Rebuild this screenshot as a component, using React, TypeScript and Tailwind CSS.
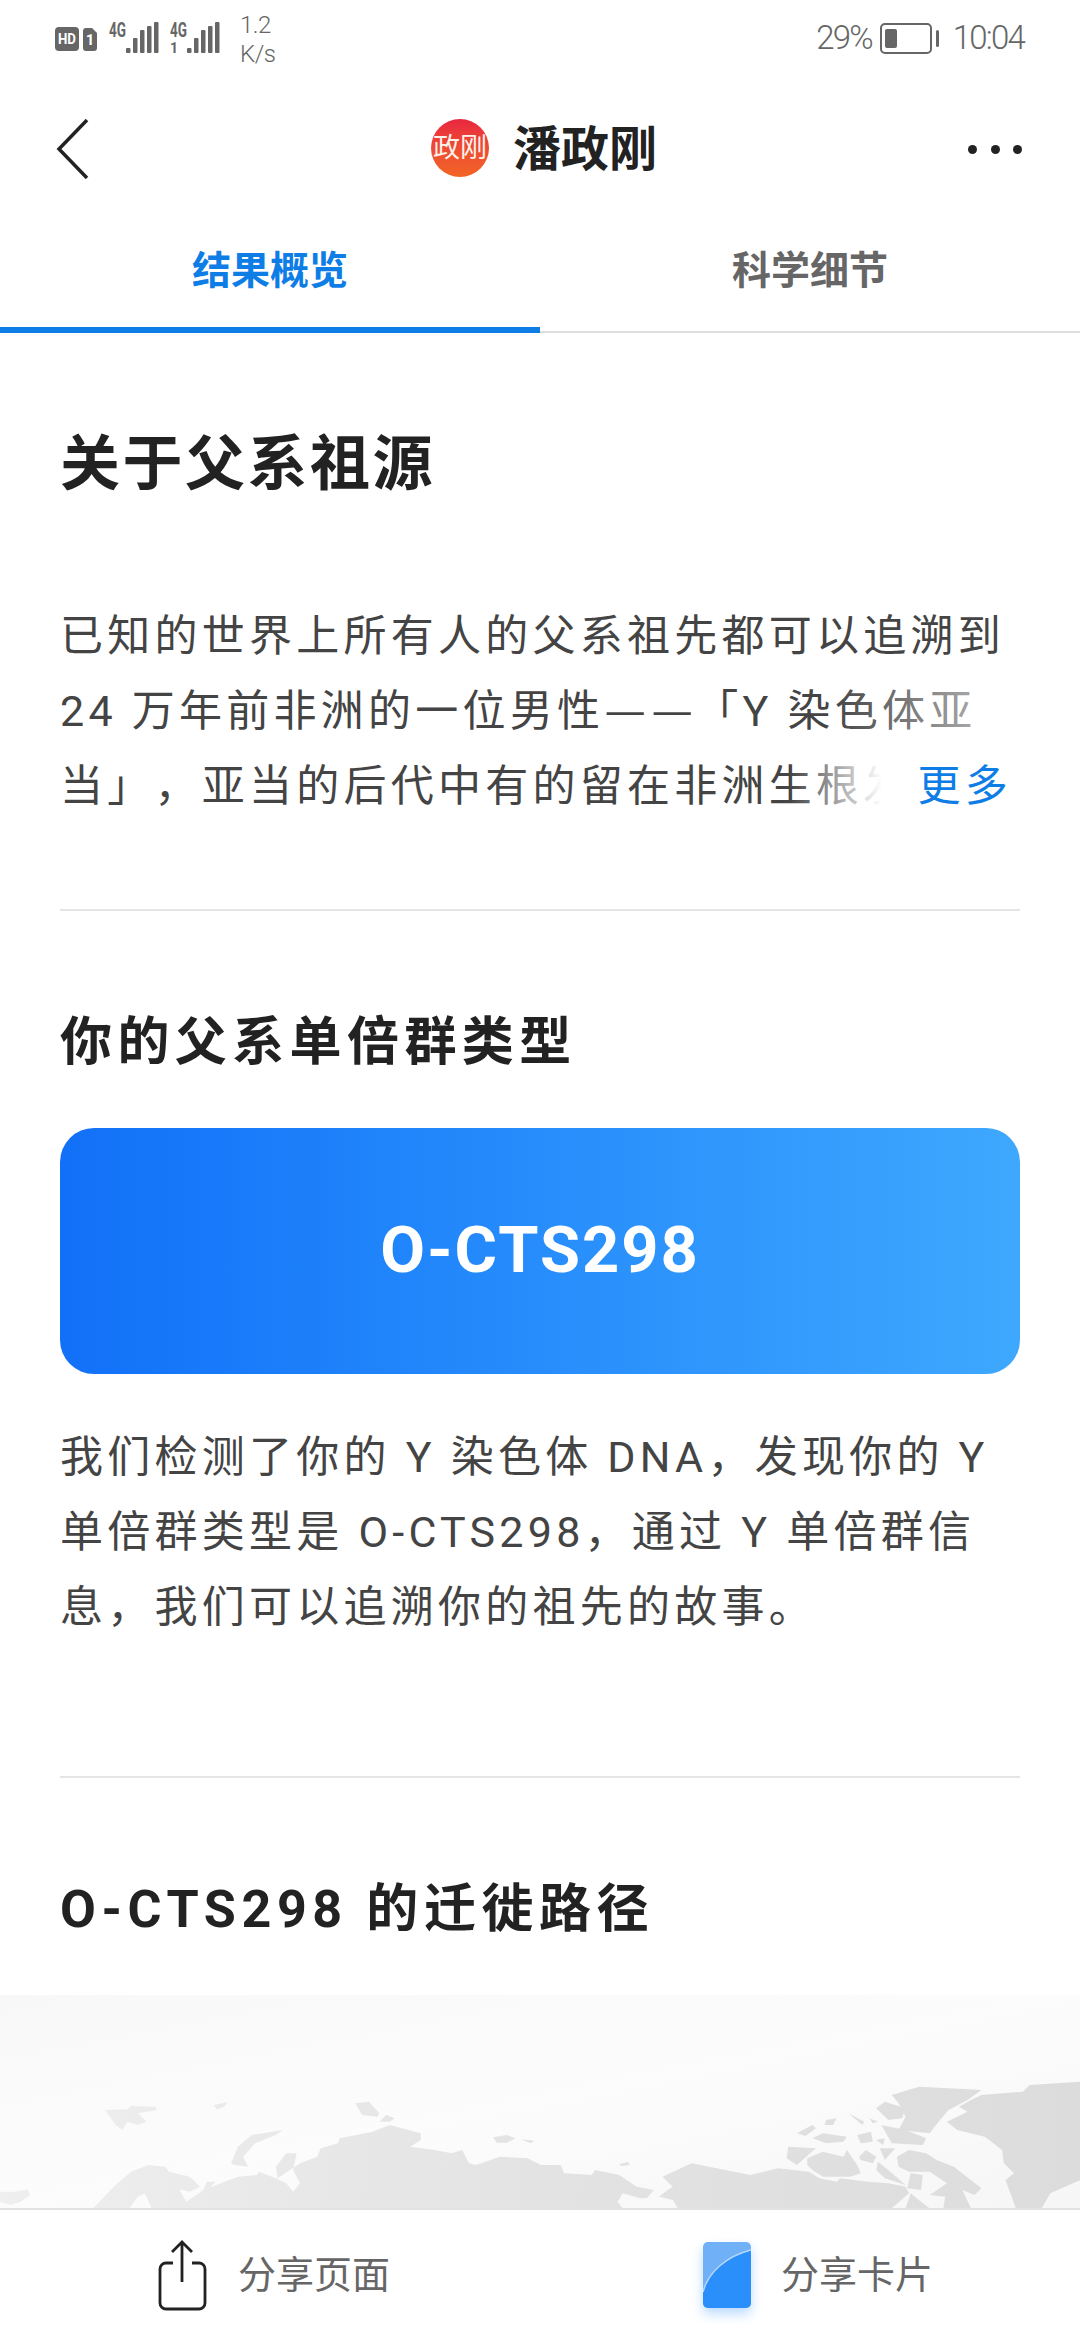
const sans = "font-['Roboto','Noto_Sans_CJK_SC',sans-serif]";

function SignalBars({ x }: { x: number }) {
  return (
    <g fill="#666666">
      <rect x={x} y="48" width="4.5" height="5" rx="1" />
      <rect x={x + 7} y="38" width="4.5" height="15" rx="1" />
      <rect x={x + 14} y="30" width="4.5" height="23" rx="1" />
      <rect x={x + 21} y="26" width="4.5" height="27" rx="1" />
      <rect x={x + 28} y="22" width="4.5" height="31" rx="1" />
    </g>
  );
}

function StatusBar() {
  return (
    <div className="flex h-[74px] items-center justify-between pl-[54px] pr-[56px] text-[#666666]">
      <div className="flex items-center">
        <svg width="180" height="42" viewBox="54 16 180 42">
          <rect x="55" y="27" width="24" height="24" rx="4" fill="#666666" />
          <text x="67" y="44" textAnchor="middle" fontSize="15" fontWeight="700" fill="#fff" fontFamily="Roboto" textLength="18" lengthAdjust="spacingAndGlyphs">HD</text>
          <path d="M86 28h6l5 5v15a3 3 0 0 1-3 3h-8a3 3 0 0 1-3-3V31a3 3 0 0 1 3-3z" fill="#666666" />
          <text x="90" y="45" textAnchor="middle" fontSize="15" fontWeight="700" fill="#fff" fontFamily="Roboto">1</text>
          <text x="109" y="37" fontSize="20" fontWeight="700" fill="#666666" fontFamily="Roboto" textLength="17" lengthAdjust="spacingAndGlyphs">4G</text>
          <SignalBars x={126} />
          <text x="170" y="37" fontSize="20" fontWeight="700" fill="#666666" fontFamily="Roboto" textLength="17" lengthAdjust="spacingAndGlyphs">4G</text>
          <text x="170" y="53" fontSize="14" fontWeight="700" fill="#666666" fontFamily="Roboto">1</text>
          <SignalBars x={187} />
        </svg>
        <div className="mt-[6px] ml-[6px] text-[24px] leading-[29px] font-light tracking-[-0.5px]">
          1.2
          <br />
          K/s
        </div>
      </div>
      <div className="flex items-center pt-[2px] text-[33px] font-light tracking-[-1.8px]">
        <span>29%</span>
        <div className="ml-[8px] flex items-center">
          <div className="flex h-[31px] w-[52px] items-center rounded-[5px] border-2 border-[#666666] px-[3px]">
            <div className="h-[19px] w-[12px] rounded-[2px] bg-[#666666]" />
          </div>
          <div className="ml-[4px] h-[17px] w-[3px] rounded-full bg-[#666666]" />
        </div>
        <span className="ml-[14px]">10:04</span>
      </div>
    </div>
  );
}

function Header() {
  return (
    <div className="grid h-[150px] grid-cols-[1fr_auto_1fr] items-center pl-[66px] pr-[58px] pt-[1px]">
      <svg width="33" height="60" viewBox="0 0 33 60" fill="none" stroke="#222222" strokeWidth="3.5" className="-mt-[2px] -ml-[10px]">
        <path d="M31 1 3 30l28 29" />
      </svg>
      <div className="flex items-center">
        <div className="-mt-[3px] flex h-[58px] w-[58px] items-center justify-center rounded-full bg-gradient-to-b from-[#e9253f] to-[#f26522] text-[27px] whitespace-nowrap text-[#fdf2ea]">
          政刚
        </div>
        <div className="ml-[24px] text-[48px] font-bold text-[#222222]">潘政刚</div>
      </div>
      <div className="flex w-[54px] justify-between justify-self-end">
        <div className="h-[9px] w-[9px] rounded-full bg-[#222222]" />
        <div className="h-[9px] w-[9px] rounded-full bg-[#222222]" />
        <div className="h-[9px] w-[9px] rounded-full bg-[#222222]" />
      </div>
    </div>
  );
}

function Tabs() {
  return (
    <div className="flex h-[109px] border-b-2 border-[#dedede] text-[39px] font-bold">
      <div className="relative flex w-[540px] items-center justify-center pb-[12px] text-[#0e7de6]">
        结果概览
        <div className="absolute bottom-[-2px] left-0 h-[6px] w-full bg-[#0e7de6]" />
      </div>
      <div className="flex w-[540px] items-center justify-center pb-[12px] text-[#666666]">科学细节</div>
    </div>
  );
}

function Dash() {
  return (
    <span className="-ml-[2px] font-['Noto_Sans_CJK_SC',sans-serif] leading-none tracking-normal">
      <span className="inline-block w-[46.5px] scale-x-[1.08] text-center">—</span>
      <span className="inline-block w-[46.5px] scale-x-[1.08] text-center">—</span>
    </span>
  );
}

function Intro() {
  return (
    <section className="mx-[60px] h-[578px] border-b-2 border-[#e5e5e5] pt-[88px]">
      <h1 className="text-[60px] leading-[88px] font-bold tracking-[2.5px] text-[#222222]">关于父系祖源</h1>
      <div className="relative mt-[90px] text-[43px] leading-[75px] tracking-[4.25px] whitespace-nowrap text-[#444444] [text-spacing-trim:space-all]">
        已知的世界上所有人的父系祖先都可以追溯到
        <br />
        24 万年前非洲的一位男性
        <Dash />
        「Y 染色体亚
        <br />
        当」，亚当的后代中有的留在非洲生根发
        <div className="absolute right-0 bottom-[75px] h-[75px] w-[190px] bg-gradient-to-r from-white/0 to-white/70" />
        <div className="absolute right-0 bottom-0 flex h-[75px] w-[230px] items-center justify-end bg-gradient-to-r from-white/0 via-white via-[40%] to-white pr-[8px] text-[#0e7de6]">
          更多
        </div>
      </div>
    </section>
  );
}

function Haplogroup() {
  return (
    <section className="mx-[60px] h-[867px] border-b-2 border-[#e5e5e5] pt-[100px]">
      <h2 className="text-[52px] leading-[64px] font-bold tracking-[5.4px] text-[#222222]">你的父系单倍群类型</h2>
      <div className="mt-[53px] flex h-[246px] items-center justify-center rounded-[34px] bg-gradient-to-r from-[#1270f8] to-[#3ea8fe] text-[65px] font-bold tracking-[2px] text-white">
        O-CTS298
      </div>
      <p className="mt-[46px] text-[43px] leading-[74.8px] tracking-[4.25px] whitespace-nowrap text-[#444444] [text-spacing-trim:space-all]">
        我们检测了你的 Y 染色体 DNA，发现你的 Y
        <br />
        单倍群类型是 O-CTS298，通过 Y 单倍群信
        <br />
        息，我们可以追溯你的祖先的故事。
      </p>
    </section>
  );
}

// outlines were read off two crops of the map: x/2.9, y/3, right crop starts at x=540
const westLand = [
  "0,425 40,425 80,418 88,435 60,455 30,465 0,455",
  "305,180 370,178 380,168 450,170 455,180 400,190 425,215 400,225 370,215 355,240 335,225",
  "620,165 660,157 650,170 630,178",
  "1030,160 1070,155 1100,190 1095,200 1050,195",
  "1100,215 1120,195 1145,205 1130,215",
  "670,340 690,290 730,255 820,240 800,255 740,280 705,320 720,350 680,345",
  "270,475 330,410 380,365 430,345 480,350 490,365 550,380 580,410 550,425 520,418 540,455 590,420 600,395 625,395 610,412 690,380 745,375 750,365 800,385 830,400 850,425 870,400 850,360 860,310 830,310 800,350 805,385 870,340 920,320 930,295 980,280 985,265 1080,245 1130,225 1220,250 1220,270 1190,290 1260,300 1310,310 1340,300 1360,340 1380,345 1450,320 1530,325 1568,345 1568,475 440,475 420,430 400,440 375,475",
  "1430,262 1470,255 1495,265 1470,278 1440,278",
  "1510,268 1550,272 1540,280",
];
const eastLand = [
  "0,345 60,345 70,370 150,375 160,360 230,375 280,410 330,420 310,445 290,445 240,430 225,455 240,475 0,475",
  "230,342 255,336 260,345 235,348",
  "355,380 440,340 610,375 690,355 780,365 810,385 860,395 870,385 950,395 1010,400 1060,410 1070,430 1020,475 400,475 385,450 345,440 370,420 385,410",
  "720,290 800,295 745,345 715,325",
  "775,325 820,305 880,320 890,300 920,345 930,370 900,380 820,380 790,360 775,345",
  "745,250 790,225 800,235 770,258",
  "790,265 820,250 890,260 880,275 830,280",
  "830,210 860,205 850,225 825,225",
  "895,190 940,215 935,225",
  "955,205 980,215 965,220",
  "920,255 960,245 965,275 930,280",
  "975,270 1000,265 995,285",
  "990,225 1060,240 1120,265 1110,285 1020,280",
  "925,320 945,300 975,320 965,340 930,330",
  "985,295 1030,295 1000,330",
  "1035,320 1070,300 1120,310 1150,330 1200,350 1280,415 1260,435 1225,420 1250,475 1170,475 1175,440 1130,435 1180,400 1130,365 1070,365 1040,350",
  "980,335 1010,360 1060,405 1000,385 975,360",
  "1075,370 1110,375 1105,420 1065,415",
  "1060,475 1075,430 1110,460 1130,475",
  "1020,135 1100,110 1280,120 1240,150 1185,180 1160,210 1130,250 1040,240 1060,200 1040,160",
  "975,175 1000,155 1060,175 1050,205 1010,210",
  "1280,135 1400,125 1420,105 1568,95 1568,390 1480,430 1455,475 1380,475 1350,390 1375,370 1345,340 1340,300 1290,260 1210,240 1180,215 1240,185 1215,170 1250,150",
];

function toMap(points: string, offsetX: number) {
  return points
    .split(' ')
    .map((p) => {
      const [x, y] = p.split(',').map(Number);
      return `${(offsetX + x / 2.9).toFixed(1)},${(55 + y / 3).toFixed(1)}`;
    })
    .join(' ');
}

function MigrationMap() {
  return (
    <div className="min-h-0 flex-1 bg-gradient-to-br from-[#f8f8f8] via-[#fcfcfc] to-[#f6f6f6]">
      <svg width="1080" height="213" viewBox="0 0 1080 213" fill="url(#land)" strokeLinejoin="round">
        <defs>
          <linearGradient id="land" gradientUnits="userSpaceOnUse" x1="0" y1="100" x2="1080" y2="160">
            <stop offset="0" stopColor="#efefef" />
            <stop offset="0.5" stopColor="#e3e3e3" />
            <stop offset="1" stopColor="#dcdcdc" />
          </linearGradient>
        </defs>
        {westLand.map((p) => (
          <polygon key={p} points={toMap(p, 0)} />
        ))}
        {eastLand.map((p) => (
          <polygon key={p} points={toMap(p, 540)} />
        ))}
      </svg>
    </div>
  );
}

function BottomBar() {
  return (
    <div className="flex h-[132px] border-t-2 border-[#e2e2e2] text-[38px] text-[#666666]">
      <div className="flex w-[540px] items-center pl-[156px]">
        <svg width="52" height="74" viewBox="0 0 52 74" fill="none" stroke="#222222" strokeWidth="2.8">
          <path d="M26 4v40M16 14 26 4l10 10" />
          <path d="M17 25h-7a6 6 0 0 0-6 6v34a6 6 0 0 0 6 6h33a6 6 0 0 0 6-6V31a6 6 0 0 0-6-6h-7" />
        </svg>
        <span className="ml-[30px]">分享页面</span>
      </div>
      <div className="flex w-[540px] items-center pl-[163px]">
        <svg width="48" height="66" viewBox="0 0 48 66" className="drop-shadow-[0_6px_6px_rgba(60,150,250,0.35)]">
          <rect x="0" y="0" width="48" height="66" rx="5" fill="#6fb0f6" />
          <path d="M0 50C5 30 24 14 48 8v53a5 5 0 0 1-5 5H5a5 5 0 0 1-5-5z" fill="#2a8ffb" />
          <path d="M0 50C5 30 24 14 48 8" fill="none" stroke="#b4d6fb" strokeWidth="1.5" />
        </svg>
        <span className="ml-[30px]">分享卡片</span>
      </div>
    </div>
  );
}

export default function App() {
  return (
    <div className={`flex h-[2340px] w-[1080px] flex-col overflow-hidden bg-white ${sans}`}>
      <StatusBar />
      <Header />
      <Tabs />
      <Intro />
      <Haplogroup />
      <section className="mx-[60px] h-[217px] pt-[100px]">
        <h2 className="text-[52px] leading-[64px] font-bold tracking-[5.6px] text-[#222222]">O-CTS298 的迁徙路径</h2>
      </section>
      <MigrationMap />
      <BottomBar />
    </div>
  );
}
